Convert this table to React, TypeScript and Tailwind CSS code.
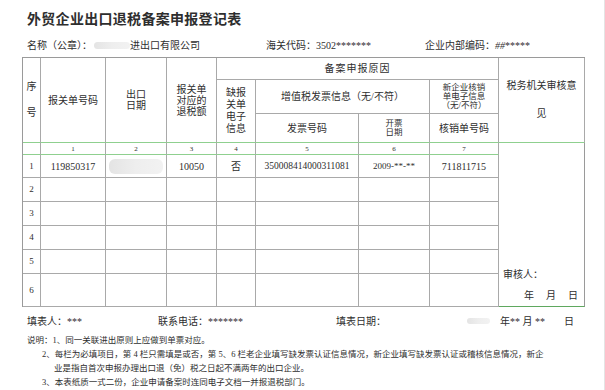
const font = { fontFamily: '"Liberation Serif", "Noto Sans CJK SC", serif' }

// cell borders: table draws left/top, every cell draws right/bottom
const c = 'border-r border-b border-r-[#a9a9a9] border-b-[#a9a9a9] text-center align-middle p-0'
const cg = 'border-r border-b border-r-[#a9a9a9] border-b-[#8fd08f] text-center align-middle p-0'

const rows = [
  { n: '1', h: 'h-[23px]', data: true },
  { n: '2', h: 'h-[24px]' },
  { n: '3', h: 'h-[24px]' },
  { n: '4', h: 'h-[24px]' },
  { n: '5', h: 'h-[24px]' },
  { n: '6', h: 'h-[33px]' },
]

function Blur({ className }: { className: string }) {
  return <span className={`inline-block rounded-[6px] bg-gradient-to-r from-[#e4e4e4] via-[#eeeeee] to-[#f2f2f2] ${className}`} />
}

export default function App() {
  return (
    <div className="w-[605px] h-[390px] bg-white text-[#2e2e2e] overflow-hidden border-r border-[#e4e4e4]" style={font}>
      <div className="pl-[27px] pt-[11px] text-[14px] font-bold leading-[18px] tracking-[0.3px]">
        外贸企业出口退税备案申报登记表
      </div>

      <div className="flex items-center h-[20px] mt-[6px] pl-[27px] text-[10px]">
        <span>名称（公章）：</span>
        <Blur className="w-[36px] h-[7px] ml-[2px]" />
        <span>进出口有限公司</span>
        <span className="ml-[66px]">海关代码：3502*******</span>
        <span className="ml-[54px]">企业内部编码：<span className="italic">##</span>*****</span>
      </div>

      <table className="ml-[22px] mt-[2px] border-separate border-spacing-0 border-l border-t border-[#9a9a9a] table-fixed w-[562px] text-[10px] leading-[11px]">
        <colgroup>
          <col className="w-[18px]" />
          <col className="w-[65px]" />
          <col className="w-[61px]" />
          <col className="w-[50px]" />
          <col className="w-[39px]" />
          <col className="w-[103px]" />
          <col className="w-[71px]" />
          <col className="w-[69px]" />
          <col className="w-[86px]" />
        </colgroup>
        <tbody>
          <tr className="h-[22px]">
            <td rowSpan={3} className={`${cg} leading-[26px]`}>序<br />号</td>
            <td rowSpan={3} className={cg}>报关单号码</td>
            <td rowSpan={3} className={cg}>出口<br />日期</td>
            <td rowSpan={3} className={cg}>报关单<br />对应的<br />退税额</td>
            <td colSpan={4} className={`${c} tracking-[1px]`}>备案申报原因</td>
            <td rowSpan={3} className={`${cg} border-r-[#9a9a9a] leading-[28px] px-[6px]`}>税务机关审核意<br />见</td>
          </tr>
          <tr className="h-[34px]">
            <td rowSpan={2} className={`${cg} leading-[12px]`}>缺报<br />关单<br />电子<br />信息</td>
            <td colSpan={2} className={c}>增值税发票信息（无/不符）</td>
            <td className={`${c} text-[8.5px] leading-[9px]`}>新企业核销<br />单电子信息<br />（无/不符）</td>
          </tr>
          <tr className="h-[29px]">
            <td className={cg}>发票号码</td>
            <td className={`${cg} text-[8.5px] leading-[9px]`}>开票<br />日期</td>
            <td className={cg}>核销单号码</td>
          </tr>
          <tr className="h-[12px]">
            <td className={`${cg} text-[7px] leading-[8px]`}></td>
            <td className={`${cg} text-[7px] leading-[8px]`}>1</td>
            <td className={`${cg} text-[7px] leading-[8px]`}>2</td>
            <td className={`${cg} text-[7px] leading-[8px]`}>3</td>
            <td className={`${cg} text-[7px] leading-[8px]`}>4</td>
            <td className={`${cg} text-[7px] leading-[8px]`}>5</td>
            <td className={`${cg} text-[7px] leading-[8px]`}>6</td>
            <td className={`${cg} text-[7px] leading-[8px]`}>7</td>
            <td
              rowSpan={7}
              className="border-r border-b border-r-[#9a9a9a] border-b-[#5fa85f] align-bottom text-left p-0 text-[10px] leading-[11px]"
            >
              <div className="pl-[4px] pb-[10px]">审核人：</div>
              <div className="flex justify-end gap-[12px] pr-[6px] pb-[5px]">
                <span>年</span>
                <span>月</span>
                <span>日</span>
              </div>
            </td>
          </tr>
          {rows.map((r) => (
            <tr key={r.n} className={r.h}>
              <td className={`${c} text-[9px]`}>{r.n}</td>
              <td className={c}>{r.data ? '119850317' : ''}</td>
              <td className={c}>{r.data ? <Blur className="w-[54px] h-[15px] align-middle" /> : ''}</td>
              <td className={c}>{r.data ? '10050' : ''}</td>
              <td className={c}>{r.data ? '否' : ''}</td>
              <td className={`${c} text-[9.5px]`}>{r.data ? '350008414000311081' : ''}</td>
              <td className={`${c} text-[9px]`}>{r.data ? '2009-**-**' : ''}</td>
              <td className={c}>{r.data ? '711811715' : ''}</td>
            </tr>
          ))}
        </tbody>
      </table>

      <div className="flex items-center h-[14px] mt-[7px] pl-[27px] text-[10px]">
        <span className="w-[131px]">填表人：***</span>
        <span className="w-[178px]">联系电话：*******</span>
        <span className="w-[131px]">填表日期：</span>
        <Blur className="w-[23px] h-[6px] rounded-[1px]" />
        <span className="ml-[10px]">年** 月 **</span>
        <span className="ml-[19px]">日</span>
      </div>

      <div className="mt-[5px] pl-[27px] text-[8.5px] leading-[14px] whitespace-nowrap">
        <div>说明：1、同一关联进出原则上应做到单票对应。</div>
        <div className="pl-[15px]">2、每栏为必填项目，第 4 栏只需填是或否，第 5、6 栏老企业填写缺发票认证信息情况，新企业填写缺发票认证或稽核信息情况，新企</div>
        <div className="pl-[27px]">业是指自首次申报办理出口退（免）税之日起不满两年的出口企业。</div>
        <div className="pl-[15px]">3、本表纸质一式二份，企业申请备案时连同电子文档一并报退税部门。</div>
      </div>
    </div>
  )
}
